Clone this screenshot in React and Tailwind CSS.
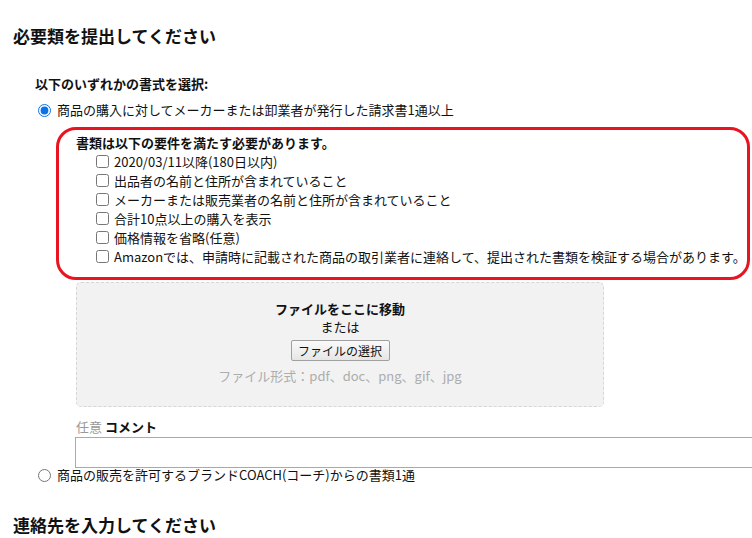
import React from "react";

const items = [
  "2020/03/11以降(180日以内)",
  "出品者の名前と住所が含まれていること",
  "メーカーまたは販売業者の名前と住所が含まれていること",
  "合計10点以上の購入を表示",
  "価格情報を省略(任意)",
  "Amazonでは、申請時に記載された商品の取引業者に連絡して、提出された書類を検証する場合があります。",
];

export default function App() {
  return (
    <div className="w-[752px] h-[538px] overflow-hidden bg-white text-[13px] text-[#111] font-['Noto_Sans_CJK_JP','Noto_Sans',sans-serif] pl-[13px]">
      <h1 className="pt-[24px] text-[17px] leading-[24px] font-bold">必要類を提出してください</h1>

      <div className="mt-[27px] ml-[22px] leading-[18px] font-bold">以下のいずれかの書式を選択:</div>

      <label className="mt-[8px] ml-[25px] flex items-center h-[18px] leading-[18px]">
        <input type="radio" name="doc" defaultChecked className="m-0 w-[13px] h-[13px] accent-[#0b72e8]" />
        <span className="ml-[6px]">商品の購入に対してメーカーまたは卸業者が発行した請求書1通以上</span>
      </label>

      <div className="mt-[8px] ml-[43px] w-[694px] h-[153px] border-[3px] border-[#e8141f] rounded-[20px] pt-[4px] pl-[17px] whitespace-nowrap">
        <div className="font-bold leading-[18px]">書類は以下の要件を満たす必要があります。</div>
        <div className="pl-[20px]">
          {items.map((t) => (
            <label key={t} className="flex items-center h-[19px] leading-[19px]">
              <input type="checkbox" className="m-0 w-[13px] h-[13px]" />
              <span className="ml-[5px]">{t}</span>
            </label>
          ))}
        </div>
      </div>

      <div className="mt-[2px] ml-[63px] w-[528px] h-[125px] bg-[#f2f2f2] border border-dashed border-[#d6d6d6] rounded-[5px] pt-[17px] flex flex-col items-center">
        <div className="font-bold leading-[18px]">ファイルをここに移動</div>
        <div className="leading-[18px]">または</div>
        <button className="mt-[4px] h-[21px] w-[99px] text-[12px] leading-[19px] border border-[#a0a0a0] rounded-[2px] bg-gradient-to-b from-[#fafafa] to-[#e6e6e6] text-[#111]">
          ファイルの選択
        </button>
        <div className="mt-[6px] leading-[18px] text-[#adadad]">ファイル形式：pdf、doc、png、gif、jpg</div>
      </div>

      <div className="mt-[11px] ml-[63px] leading-[18px]">
        <span className="text-[#999]">任意</span> <span className="font-bold">コメント</span>
      </div>
      <div className="mt-[1px] ml-[62px] w-[700px] h-[31px] border border-[#a9a9a9] bg-white"></div>

      <label className="ml-[25px] flex items-center h-[14px] leading-[14px]">
        <input type="radio" name="doc" className="m-0 w-[13px] h-[13px]" />
        <span className="ml-[6px]">商品の販売を許可するブランドCOACH(コーチ)からの書類1通</span>
      </label>

      <h2 className="mt-[31px] text-[17px] leading-[24px] font-bold">連絡先を入力してください</h2>
    </div>
  );
}
